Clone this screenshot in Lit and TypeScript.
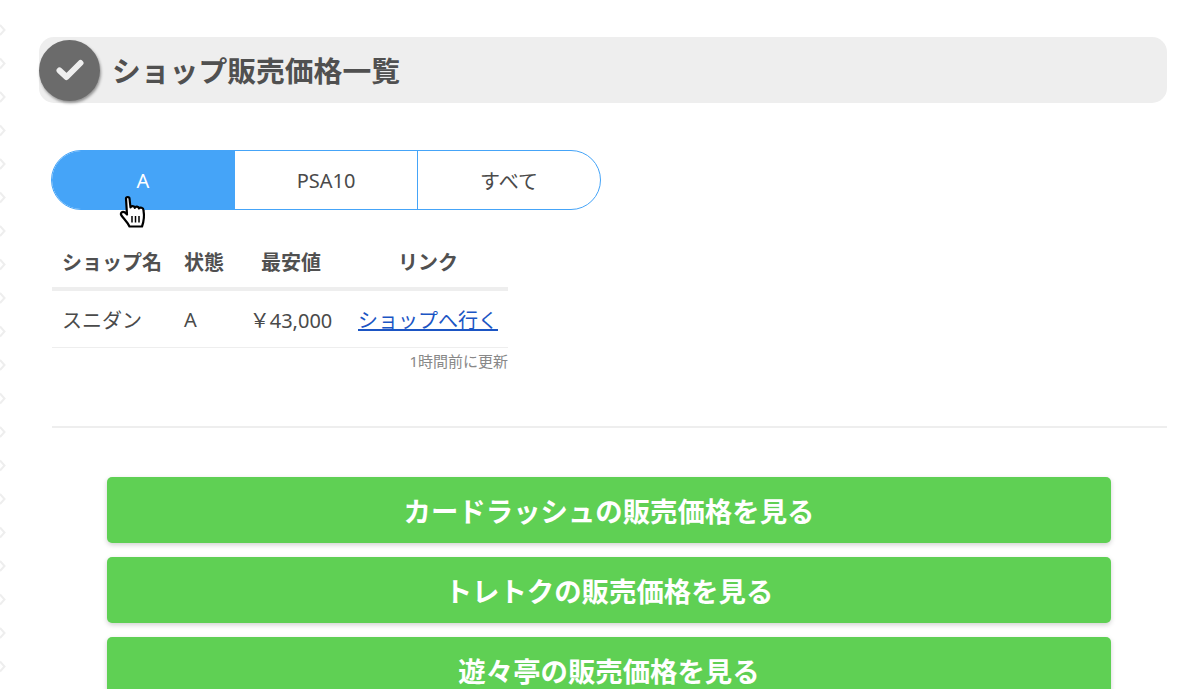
import { LitElement, html, css, svg } from "lit";
import { customElement } from "lit/decorators.js";

const diamonds = Array.from({ length: 21 }, (_, i) => 30 + i * 33.5);

@customElement("app-root")
export class AppRoot extends LitElement {
  static styles = css`
    :host {
      display: block;
      position: relative;
      height: 689px;
      overflow: hidden;
      background: #fff;
      color: #4a4a4a;
      font-family: "Noto Sans", "Noto Sans CJK JP", sans-serif;
    }
    .edge { position: absolute; left: 0; top: 0; width: 8px; height: 689px; }
    .page { display: flex; flex-direction: column; padding: 37px 33px 0 39px; }
    .heading {
      display: flex; align-items: center; gap: 12px; height: 66px;
      background: #eee; border-radius: 15px;
    }
    .badge {
      width: 61px; height: 61px; border-radius: 50%; flex: none;
      background: #6b6b6b; box-shadow: 1px 2px 3px rgba(0,0,0,.4);
      display: flex; align-items: center; justify-content: center;
    }
    h2 { margin: 0; font-size: 28.8px; line-height: 1; font-weight: 700; color: #505050; font-family: "Noto Sans CJK JP", sans-serif; }
    .body { display: flex; flex-direction: column; margin-left: 13px; }
    .tabs {
      display: flex; width: 550px; height: 60px; margin: 47px 0 0 -1px;
      box-sizing: border-box; border: 1px solid #45a4f8; border-radius: 30px; overflow: hidden;
    }
    .tab {
      flex: 1; display: flex; align-items: center; justify-content: center;
      font-size: 20px; color: #4a4a4a; border-left: 1px solid #45a4f8;
      font-family: "Noto Sans", "Noto Sans CJK JP", sans-serif;
    }
    .tab:first-child { border-left: 0; background: #45a4f8; color: #fff; }
    table { width: 456px; border-collapse: collapse; table-layout: fixed; margin-top: 25px; font-size: 20px; }
    .c1 { width: 121px; } .c2 { width: 61px; } .c3 { width: 114px; } .c4 { width: 160px; }
    th {
      height: 52px; padding: 0; font-weight: 700; font-size: 20px; color: #505050;
      border-bottom: 4px solid #eee; text-align: center; vertical-align: middle;
      font-family: "Noto Sans CJK JP", sans-serif;
    }
    td { height: 56px; padding: 0; border-bottom: 1px solid #eee; text-align: center; color: #4a4a4a; }
    .left { text-align: left; padding-left: 10px; }
    .left2 { text-align: left; padding-left: 11px; }
    a { color: #1b55c4; text-decoration: underline; }
    .note { width: 456px; text-align: right; font-size: 15px; line-height: 26px; color: #888; }
    hr { width: 100%; height: 2px; border: 0; background: #eee; margin: 52px 0 0; }
    .actions { display: flex; flex-direction: column; gap: 14px; margin: 49px 56px 0 55px; }
    .btn {
      height: 66px; flex: none; border-radius: 5px; background: #5fd054; color: #fff;
      display: flex; align-items: center; justify-content: center;
      font-size: 27.4px; font-weight: 700; box-shadow: 0 2px 5px rgba(0,0,0,.18);
      font-family: "Noto Sans CJK JP", sans-serif;
    }
    .cursor { position: absolute; left: 118px; top: 195px; width: 32px; height: 36px; overflow: visible; }
  `;

  render() {
    return html`
      <svg class="edge" viewBox="0 0 8 689" aria-hidden="true">
        ${diamonds.map(
          (y) => svg`<path d="M0 ${y - 5}L4.5 ${y}L0 ${y + 5}" fill="none" stroke="#eeeeee" stroke-width="2"/>`
        )}
      </svg>
      <div class="page">
        <div class="heading">
          <div class="badge">
            <svg width="28" height="22" viewBox="0 0 28 22" aria-hidden="true">
              <path d="M3.5 11.5L10.5 18L24.5 4" fill="none" stroke="#efefef" stroke-width="6" stroke-linecap="round" stroke-linejoin="round"/>
            </svg>
          </div>
          <h2>ショップ販売価格一覧</h2>
        </div>
        <div class="body">
          <div class="tabs">
            <div class="tab">A</div>
            <div class="tab">PSA10</div>
            <div class="tab">すべて</div>
          </div>
          <table>
            <colgroup><col class="c1" /><col class="c2" /><col class="c3" /><col class="c4" /></colgroup>
            <thead>
              <tr><th class="left">ショップ名</th><th class="left2">状態</th><th>最安値</th><th>リンク</th></tr>
            </thead>
            <tbody>
              <tr>
                <td class="left">スニダン</td>
                <td class="left2">A</td>
                <td>￥43,000</td>
                <td><a href="#">ショップへ行く</a></td>
              </tr>
            </tbody>
          </table>
          <div class="note">1時間前に更新</div>
          <hr />
          <div class="actions">
            <div class="btn">カードラッシュの販売価格を見る</div>
            <div class="btn">トレトクの販売価格を見る</div>
            <div class="btn">遊々亭の販売価格を見る</div>
          </div>
        </div>
      </div>
      <svg class="cursor" viewBox="0 0 32 36" aria-hidden="true">
        <path d="M8 3.5C8 1.5 11.5 1.5 11.5 3.5L12.5 12.5C13 10.5 16.5 10.5 16.8 12.8C17.5 11 20.5 11.2 21 13.5C22 12 25.5 12.5 25.5 15.5C26.5 21 26 26 24 31.5L11.5 31.5C9.5 27 6 24 3.5 20.5C2 18.5 4 15.5 7 17.5L9 19.5Z"
          fill="#fff" stroke="#000" stroke-width="2.2" stroke-linejoin="round"/>
        <path d="M14 21V27.5M17.5 21V27.5M21 21V27.5" stroke="#000" stroke-width="1.5"/>
      </svg>
    `;
  }
}
